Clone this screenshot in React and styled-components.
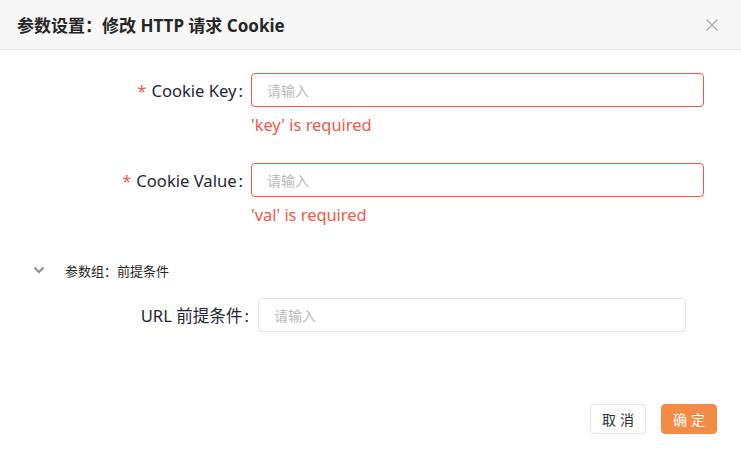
import React from 'react';
import styled, { createGlobalStyle } from 'styled-components';

const GlobalStyle = createGlobalStyle`
  html, body {
    margin: 0;
    padding: 0;
    background: #ffffff;
  }
  body {
    font-family: 'Noto Sans', 'Noto Sans CJK SC', sans-serif;
    color: #303133;
  }
`;

const Dialog = styled.div`
  width: 741px;
  height: 461px;
  display: flex;
  flex-direction: column;
  background: #fff;
`;

const Header = styled.div`
  height: 50px;
  box-sizing: border-box;
  display: flex;
  align-items: center;
  justify-content: space-between;
  padding: 0 22px 0 17px;
  background: #f7f7f7;
  border-bottom: 1px solid #e6e6ee;
`;

const Title = styled.div`
  font-size: 17px;
  font-weight: 700;
  color: #262626;
`;

const Close = styled.button`
  border: none;
  background: none;
  padding: 0;
  width: 14px;
  height: 14px;
  display: flex;
  color: #a8abb8;
`;

const Body = styled.div`
  flex: 1;
  display: flex;
  flex-direction: column;
  padding: 23px 37px 0 0;
`;

const FormRow = styled.div`
  display: grid;
  grid-template-columns: ${(p) => p.$labelWidth}px 1fr;
  column-gap: ${(p) => p.$gap}px;
  margin-bottom: ${(p) => p.$bottom}px;
  margin-right: ${(p) => p.$right || 0}px;
`;

const Label = styled.label`
  height: 34px;
  display: flex;
  align-items: center;
  justify-content: flex-end;
  font-size: 16.6px;
  color: #1f2633;
  white-space: nowrap;
`;

const Star = styled.span`
  color: #f25a4c;
  margin-right: 5px;
`;

const Colon = styled.span`
  margin-left: 2px;
`;

const Field = styled.div`
  display: flex;
  flex-direction: column;
`;

const Input = styled.input`
  height: 34px;
  box-sizing: border-box;
  border: 1px solid ${(p) => (p.$error ? '#f0574a' : '#e4e6ee')};
  border-radius: 4px;
  padding: 0 15px;
  font-family: inherit;
  font-size: 14px;
  outline: none;
  &::placeholder {
    color: #b8b9bf;
  }
`;

const ErrorText = styled.div`
  color: #f0574a;
  font-size: 16.4px;
  line-height: 22px;
  margin-top: 7px;
`;

const GroupHeader = styled.div`
  display: flex;
  align-items: center;
  padding-left: 33px;
  margin-top: 12px;
  height: 24px;
  font-size: 13px;
  color: #262626;
`;

const Chevron = styled.span`
  display: flex;
  width: 14px;
  margin-right: 18px;
  color: #8a8d9c;
`;

const GroupBody = styled.div`
  padding-top: 16px;
`;

const Footer = styled.div`
  display: flex;
  justify-content: flex-end;
  gap: 15px;
  padding: 0 24px 27px 0;
`;

const Button = styled.button`
  width: 56px;
  height: 30px;
  box-sizing: border-box;
  border-radius: 4px;
  font-family: inherit;
  font-size: 14px;
  letter-spacing: 4px;
  padding: 0 0 0 4px;
  border: 1px solid ${(p) => (p.$primary ? '#f28c45' : '#e4e6ee')};
  background: ${(p) => (p.$primary ? '#f28c45' : '#fff')};
  color: ${(p) => (p.$primary ? '#fff' : '#303133')};
`;

const App = () => (
  <Dialog>
    <GlobalStyle />
    <Header>
      <Title>参数设置：修改 HTTP 请求 Cookie</Title>
      <Close>
        <svg width="14" height="14" viewBox="0 0 14 14">
          <path d="M1.5 1.5 L12.5 12.5 M12.5 1.5 L1.5 12.5" stroke="currentColor" strokeWidth="1.3" />
        </svg>
      </Close>
    </Header>
    <Body>
      <FormRow $labelWidth={243} $gap={8} $bottom={27}>
        <Label>
          <Star>*</Star>Cookie Key<Colon>:</Colon>
        </Label>
        <Field>
          <Input $error placeholder="请输入" />
          <ErrorText>'key' is required</ErrorText>
        </Field>
      </FormRow>
      <FormRow $labelWidth={243} $gap={8} $bottom={20}>
        <Label>
          <Star>*</Star>Cookie Value<Colon>:</Colon>
        </Label>
        <Field>
          <Input $error placeholder="请输入" />
          <ErrorText>'val' is required</ErrorText>
        </Field>
      </FormRow>
      <GroupHeader>
        <Chevron>
          <svg width="12" height="8" viewBox="0 0 12 8">
            <path d="M1.5 1.5 L6 6 L10.5 1.5" fill="none" stroke="currentColor" strokeWidth="2" />
          </svg>
        </Chevron>
        参数组：前提条件
      </GroupHeader>
      <GroupBody>
        <FormRow $labelWidth={249} $gap={9} $bottom={0} $right={18}>
          <Label>
            URL 前提条件<Colon>:</Colon>
          </Label>
          <Input placeholder="请输入" />
        </FormRow>
      </GroupBody>
    </Body>
    <Footer>
      <Button>取消</Button>
      <Button $primary>确定</Button>
    </Footer>
  </Dialog>
);

export default App;
